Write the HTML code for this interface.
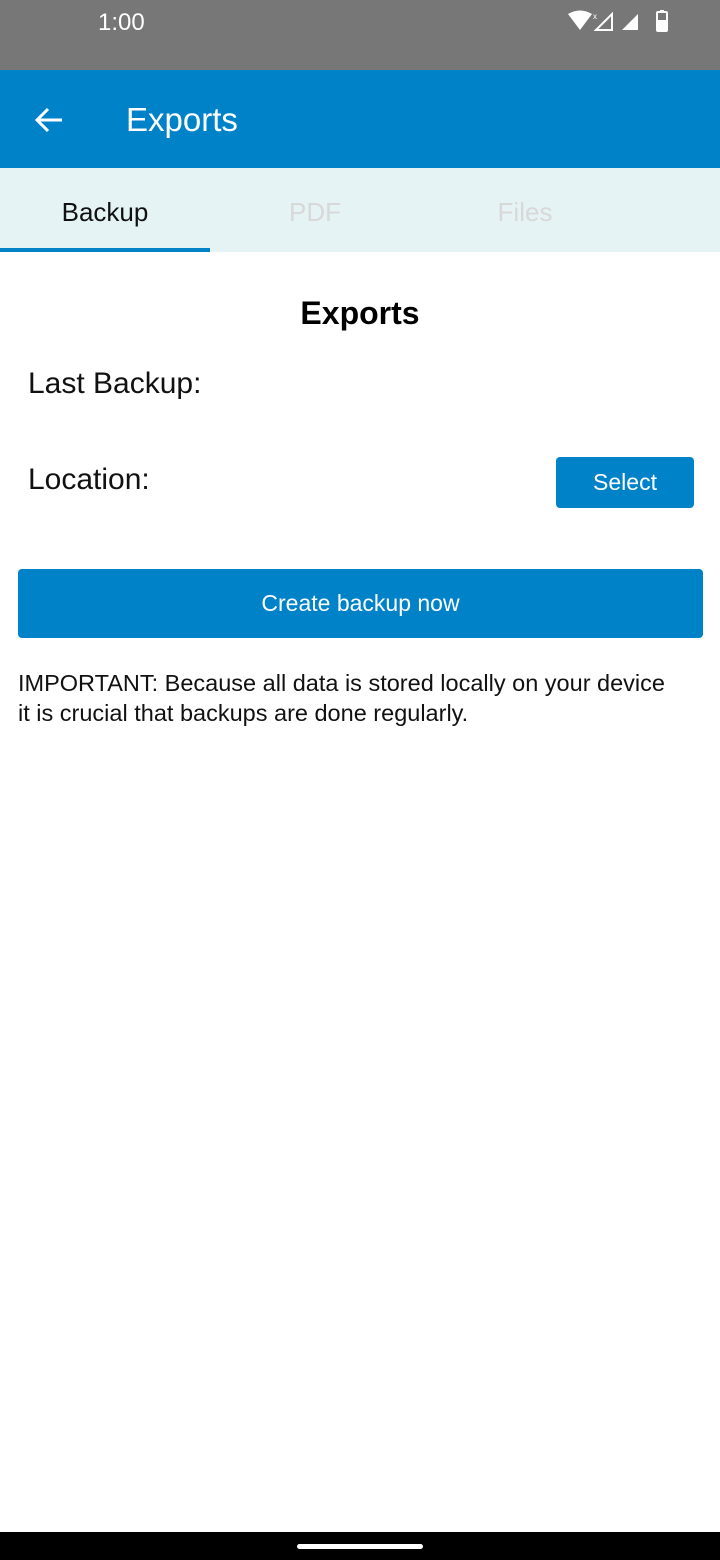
<!DOCTYPE html>
<html><head><style>
*{margin:0;padding:0;box-sizing:border-box}
body{width:720px;height:1560px;position:relative;background:#fff;font-family:"Liberation Sans",Roboto,sans-serif;overflow:hidden}
.abs{position:absolute}
</style></head><body>
<div class="abs" style="left:0;top:0;width:720px;height:70px;background:#777"></div>
<div class="abs" style="left:98px;top:8px;font-size:24px;color:#fff;line-height:30px">1:00</div>
<svg class="abs" style="left:566px;top:9px" width="110" height="24" viewBox="0 0 110 24">
<path d="M2 5 Q14 -2 26 5 L14 21 Z" fill="#fff"/>
<text x="27" y="10" font-size="8" fill="#fff" font-family="Liberation Sans">x</text>
<path d="M30 21 L46 5 L46 21 Z" fill="none" stroke="#fff" stroke-width="2"/>
<path d="M56 21 L72 5 L72 21 Z" fill="#fff"/>
<rect x="91" y="3" width="10" height="19" rx="1" fill="none" stroke="#fff" stroke-width="2"/>
<rect x="91" y="11" width="10" height="11" fill="#fff"/>
<rect x="94" y="1" width="4" height="3" fill="#fff"/>
</svg>
<div class="abs" style="left:0;top:70px;width:720px;height:98px;background:#0082c8"></div>
<svg class="abs" style="left:34px;top:106px" width="30" height="28" viewBox="0 0 30 28"><path d="M28 14 H4 M14 3 L3 14 L14 25" stroke="#fff" stroke-width="3" fill="none"/></svg>
<div class="abs" style="left:126px;top:100px;font-size:33px;color:#fff;line-height:40px">Exports</div>
<div class="abs" style="left:0;top:168px;width:720px;height:84px;background:#e5f3f5"></div>
<div class="abs" style="left:0;top:196px;width:210px;text-align:center;font-size:26px;color:#111;line-height:32px">Backup</div>
<div class="abs" style="left:210px;top:196px;width:210px;text-align:center;font-size:26px;color:#d8d8d8;line-height:32px">PDF</div>
<div class="abs" style="left:420px;top:196px;width:210px;text-align:center;font-size:26px;color:#d8d8d8;line-height:32px">Files</div>
<div class="abs" style="left:0;top:248px;width:210px;height:4px;background:#0082c8"></div>
<div class="abs" style="left:0;top:294px;width:720px;text-align:center;font-size:32px;font-weight:bold;line-height:38px">Exports</div>
<div class="abs" style="left:28px;top:366px;font-size:30px;line-height:36px;color:#111">Last Backup:</div>
<div class="abs" style="left:28px;top:462px;font-size:30px;line-height:36px;color:#111">Location:</div>
<div class="abs" style="left:556px;top:457px;width:138px;height:51px;background:#0082c8;border-radius:4px;color:#fff;font-size:23px;line-height:51px;text-align:center">Select</div>
<div class="abs" style="left:18px;top:569px;width:685px;height:69px;background:#0082c8;border-radius:4px;color:#fff;font-size:23px;line-height:69px;text-align:center">Create backup now</div>
<div class="abs" style="left:18px;top:668px;width:700px;font-size:23.5px;line-height:30px;color:#111;white-space:nowrap">IMPORTANT: Because all data is stored locally on your device<br>it is crucial that backups are done regularly.</div>
<div class="abs" style="left:0;top:1532px;width:720px;height:28px;background:#000"></div>
<div class="abs" style="left:297px;top:1544px;width:126px;height:5px;border-radius:3px;background:#fff"></div>
</body></html>
